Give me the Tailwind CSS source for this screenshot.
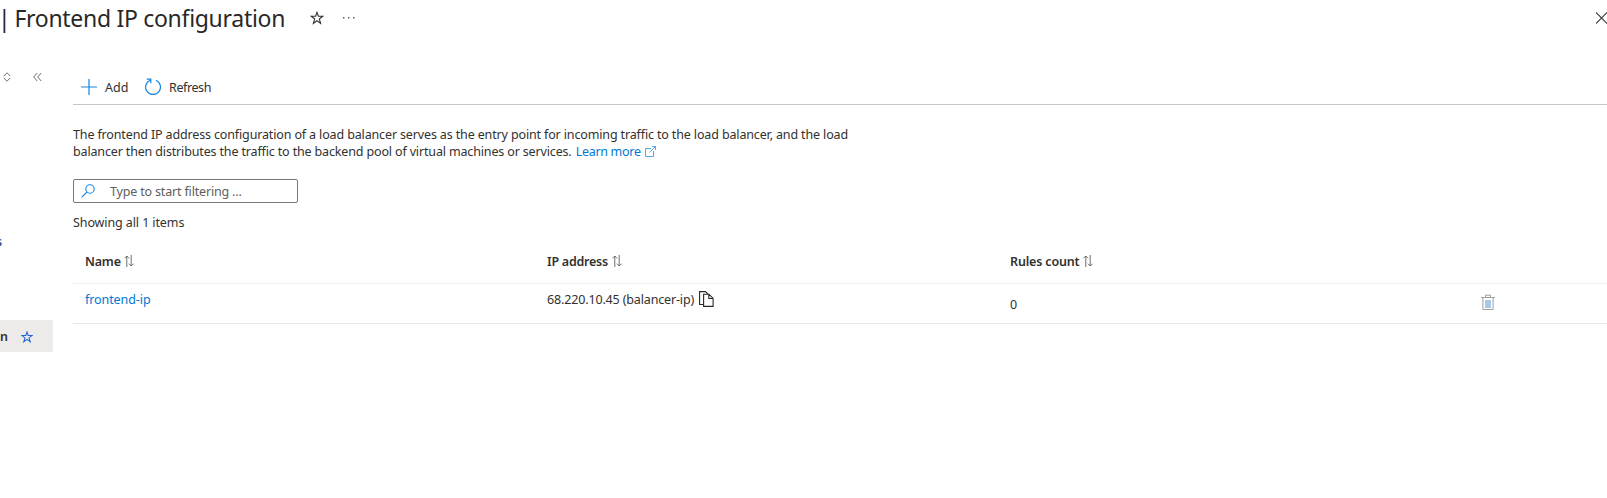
<!DOCTYPE html>
<html lang="en">
<head>
<meta charset="utf-8">
<title>Frontend IP configuration</title>
<script src="https://cdn.jsdelivr.net/npm/@tailwindcss/browser@4"></script>
</head>
<body class="h-[498px] overflow-hidden bg-white font-['Noto_Sans',sans-serif] text-[12.5px] leading-[17px] text-[#323130]">
<header class="flex h-9 w-[1607px] items-center overflow-hidden">
  <h1 class="-ml-[2px] w-[287px] shrink-0 whitespace-pre text-[23px] leading-9 tracking-[-0.3px] text-[#292827]"><span class="tracking-[-1.1px]">| </span>Frontend IP configuration</h1>
  <svg class="ml-[25px] size-[14px] shrink-0" viewBox="0 0 14 14" fill="none" stroke="#323130" stroke-width="1.1"><path d="M7 1.4 8.4 5.3H12.8L9.3 8 10.6 12.4 7 9.8 3.4 12.4 4.7 8 1.2 5.3H5.6Z"/></svg>
  <svg class="ml-[19px] h-[14px] w-3 shrink-0" viewBox="0 0 12 14" fill="#605e5c"><path d="M0 6h1.4v1.4H0zM5 6h1.4v1.4H5zM10 6h1.4v1.4H10z"/></svg>
  <svg class="ml-auto h-3 w-[11px] shrink-0" viewBox="0 0 11 12" fill="none" stroke="#3b3a39" stroke-width="1.1"><path d="M0 .5 11.5 12M0 11.5 11.5 0"/></svg>
</header>
<div class="flex w-[1607px]">
  <aside class="w-[53px] shrink-0 overflow-hidden">
    <div class="mt-[34px] flex h-[14px] items-center">
      <svg class="ml-[3px] h-3 w-2" viewBox="0 0 8 12" fill="none" stroke="#605e5c" stroke-width=".9"><path d="M.8 5 4 1.8 7.2 5M.8 7 4 10.2 7.2 7"/></svg>
      <svg class="ml-[22px] h-[10px] w-[9px]" viewBox="0 0 9 10" fill="none" stroke="#605e5c" stroke-width=".9"><path d="M4.2 1 .7 5l3.5 4M8.2 1 4.7 5l3.5 4"/></svg>
    </div>
    <div class="mt-[149px] -ml-[4px] h-[18px] font-medium text-[#1b3a7a]">s</div>
    <div class="mt-[69px] flex h-8 items-center bg-[#edebe9]">
      <span class="w-2 pt-px font-semibold"><span class="flex w-2 justify-end">on</span></span>
      <svg class="ml-[13px] mt-px size-3" viewBox="0 0 14 14" fill="none" stroke="#1f62d0" stroke-width="1.2"><path d="M7 1.2 8.4 5.3H13L9.3 8 10.8 12.6 7 9.8 3.2 12.6 4.7 8 1 5.3H5.6Z"/></svg>
    </div>
  </aside>
  <main class="ml-5 w-[1534px] shrink-0">
    <div class="mt-[34px] flex h-[35px] items-center border-b border-[#c8c6c4] pl-2">
      <svg class="size-4" viewBox="0 0 16 16" fill="none" stroke="#1785dc" stroke-width="1.2"><path d="M8 0v16M0 8h16"/></svg>
      <span class="ml-2 w-[24px]">Add</span>
      <svg class="ml-4 h-[18px] w-[17px]" viewBox="0 0 17 18" fill="none" stroke="#1785dc" stroke-width="1.2"><path d="M10.9 2.2A7.4 7.4 0 1 1 5.2 2.2M1.8 1.2h4v4"/></svg>
      <span class="ml-[7px] tracking-[-0.4px]">Refresh</span>
    </div>
    <p class="mt-[21px] h-[34px] whitespace-nowrap tracking-[-0.14px]">The frontend IP address configuration of a load balancer serves as the entry point for incoming traffic to the load balancer, and the load<br><span class="tracking-[-0.15px]">balancer then distributes the traffic to the backend pool of virtual machines or services. </span><a class="tracking-[-0.3px] text-[#0078d4]"><span class="ml-px">Learn more </span><svg class="ml-px inline h-[11px] w-[11px] align-[-1px]" viewBox="0 0 11 11" fill="none" stroke="#2d8fdd" stroke-width=".8"><path d="M6 2.5H.5v8h8V5M7 .5h3.5V4M10.5.5l-6 6"/></svg></a></p>
    <div class="mt-[19px] flex h-6 w-[225px] items-center rounded-[2px] border border-[#7a7876] pl-[7px]">
      <svg class="size-[14px]" viewBox="0 0 14 14" fill="none" stroke="#1785dc" stroke-width="1.1"><circle cx="9" cy="5" r="4.2"/><path d="M6 8 .6 13.4"/></svg>
      <span class="ml-[15px] tracking-[-0.17px] text-[#605e5c]">Type to start filtering ...</span>
    </div>
    <div class="mt-[11px] h-[17px] tracking-[-0.1px]">Showing all 1 items</div>
    <div class="mt-[8px] grid h-[45px] grid-cols-[462px_463px_1fr] items-center border-b border-[#f0efee] pl-3 font-semibold">
      <div class="flex items-center gap-[3px]"><span class="tracking-[-0.2px]">Name</span><svg class="h-3 w-[10px]" viewBox="0 0 10 12" fill="none" stroke="#605e5c" stroke-width=".9"><path d="M2.8 12V1M.5 3.3 2.8 1l2.3 2.3M7.2 0v11M4.9 8.7 7.2 11l2.3-2.3"/></svg></div>
      <div class="flex items-center gap-1"><span class="tracking-[-0.25px]">IP address</span><svg class="h-3 w-[10px]" viewBox="0 0 10 12" fill="none" stroke="#605e5c" stroke-width=".9"><path d="M2.8 12V1M.5 3.3 2.8 1l2.3 2.3M7.2 0v11M4.9 8.7 7.2 11l2.3-2.3"/></svg></div>
      <div class="flex items-center gap-[3px]"><span class="tracking-[-0.16px]">Rules count</span><svg class="h-3 w-[10px]" viewBox="0 0 10 12" fill="none" stroke="#605e5c" stroke-width=".9"><path d="M2.8 12V1M.5 3.3 2.8 1l2.3 2.3M7.2 0v11M4.9 8.7 7.2 11l2.3-2.3"/></svg></div>
    </div>
    <div class="grid h-10 grid-cols-[462px_463px_471px_1fr] border-b border-[#e9e8e7] pl-3">
      <a class="pt-[7px] tracking-[-0.08px] text-[#0078d4]">frontend-ip</a>
      <div class="flex h-8 items-start pt-[7px]"><span class="tracking-[-0.15px]">68.220.10.45 (balancer-ip)</span><svg class="ml-[5px] h-4 w-[15px]" viewBox="0 0 15 16" fill="none" stroke="#292827" stroke-width="1.1"><path d="M4.5 13.5H.6V.6h5.9l2.6 2.6M4.6 3.2h5.3l4.2 4.2v8H4.6zM9.8 3.3v4.2h4.2"/></svg></div>
      <span class="pt-[12px]">0</span>
      <svg class="mt-[10px] h-[17px] w-[14px]" viewBox="0 0 14 17" fill="none" stroke="#a19f9d"><path d="M0 3.5h14M4.5 3V1.2h5V3M1.9 4v11.5h10.2V4"/><path fill="#a9c9e9" stroke="none" d="M4 6h6v8H4z"/></svg>
    </div>
  </main>
</div>
</body>
</html>
